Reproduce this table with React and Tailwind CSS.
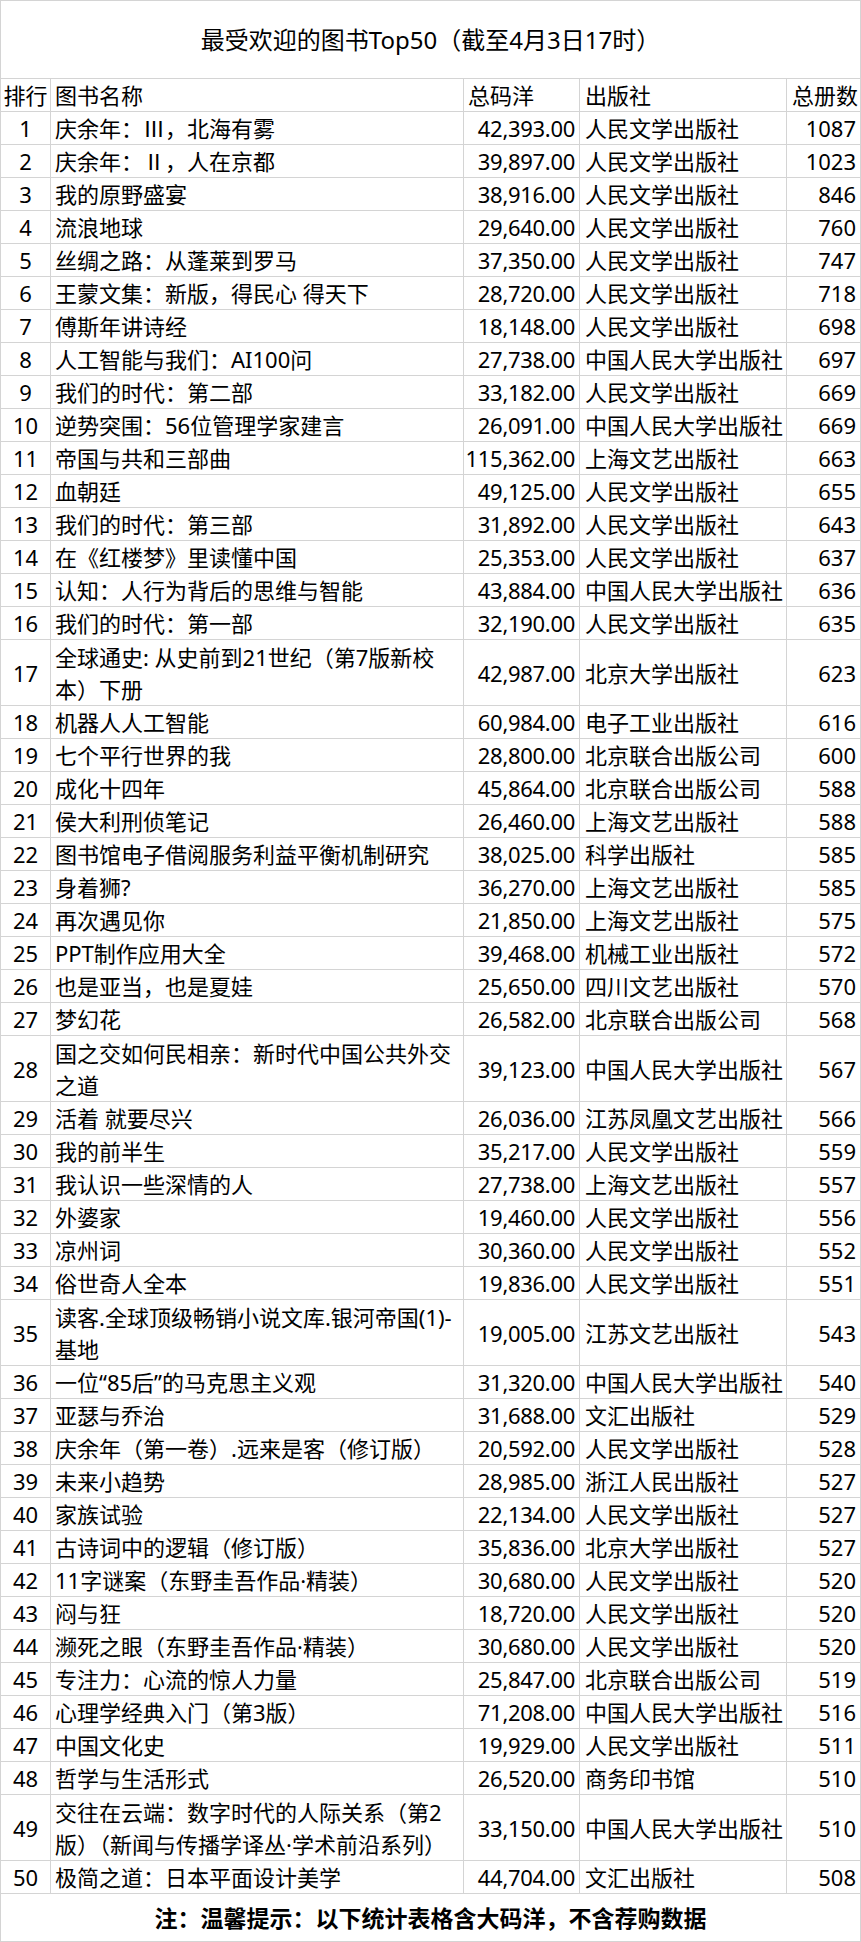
import React from "react";

const rows = [
  [1, "庆余年：Ⅲ，北海有雾", "42,393.00", "人民文学出版社", "1087"],
  [2, "庆余年：Ⅱ，人在京都", "39,897.00", "人民文学出版社", "1023"],
  [3, "我的原野盛宴", "38,916.00", "人民文学出版社", "846"],
  [4, "流浪地球", "29,640.00", "人民文学出版社", "760"],
  [5, "丝绸之路：从蓬莱到罗马", "37,350.00", "人民文学出版社", "747"],
  [6, "王蒙文集：新版，得民心 得天下", "28,720.00", "人民文学出版社", "718"],
  [7, "傅斯年讲诗经", "18,148.00", "人民文学出版社", "698"],
  [8, "人工智能与我们：AI100问", "27,738.00", "中国人民大学出版社", "697"],
  [9, "我们的时代：第二部", "33,182.00", "人民文学出版社", "669"],
  [10, "逆势突围：56位管理学家建言", "26,091.00", "中国人民大学出版社", "669"],
  [11, "帝国与共和三部曲", "115,362.00", "上海文艺出版社", "663"],
  [12, "血朝廷", "49,125.00", "人民文学出版社", "655"],
  [13, "我们的时代：第三部", "31,892.00", "人民文学出版社", "643"],
  [14, "在《红楼梦》里读懂中国", "25,353.00", "人民文学出版社", "637"],
  [15, "认知：人行为背后的思维与智能", "43,884.00", "中国人民大学出版社", "636"],
  [16, "我们的时代：第一部", "32,190.00", "人民文学出版社", "635"],
  [17, ["全球通史: 从史前到21世纪（第7版新校", "本）下册"], "42,987.00", "北京大学出版社", "623"],
  [18, "机器人人工智能", "60,984.00", "电子工业出版社", "616"],
  [19, "七个平行世界的我", "28,800.00", "北京联合出版公司", "600"],
  [20, "成化十四年", "45,864.00", "北京联合出版公司", "588"],
  [21, "侯大利刑侦笔记", "26,460.00", "上海文艺出版社", "588"],
  [22, "图书馆电子借阅服务利益平衡机制研究", "38,025.00", "科学出版社", "585"],
  [23, "身着狮?", "36,270.00", "上海文艺出版社", "585"],
  [24, "再次遇见你", "21,850.00", "上海文艺出版社", "575"],
  [25, "PPT制作应用大全", "39,468.00", "机械工业出版社", "572"],
  [26, "也是亚当，也是夏娃", "25,650.00", "四川文艺出版社", "570"],
  [27, "梦幻花", "26,582.00", "北京联合出版公司", "568"],
  [28, ["国之交如何民相亲：新时代中国公共外交", "之道"], "39,123.00", "中国人民大学出版社", "567"],
  [29, "活着 就要尽兴", "26,036.00", "江苏凤凰文艺出版社", "566"],
  [30, "我的前半生", "35,217.00", "人民文学出版社", "559"],
  [31, "我认识一些深情的人", "27,738.00", "上海文艺出版社", "557"],
  [32, "外婆家", "19,460.00", "人民文学出版社", "556"],
  [33, "凉州词", "30,360.00", "人民文学出版社", "552"],
  [34, "俗世奇人全本", "19,836.00", "人民文学出版社", "551"],
  [35, ["读客.全球顶级畅销小说文库.银河帝国(1)-", "基地"], "19,005.00", "江苏文艺出版社", "543"],
  [36, "一位“85后”的马克思主义观", "31,320.00", "中国人民大学出版社", "540"],
  [37, "亚瑟与乔治", "31,688.00", "文汇出版社", "529"],
  [38, "庆余年（第一卷）.远来是客（修订版）", "20,592.00", "人民文学出版社", "528"],
  [39, "未来小趋势", "28,985.00", "浙江人民出版社", "527"],
  [40, "家族试验", "22,134.00", "人民文学出版社", "527"],
  [41, "古诗词中的逻辑（修订版）", "35,836.00", "北京大学出版社", "527"],
  [42, "11字谜案（东野圭吾作品·精装）", "30,680.00", "人民文学出版社", "520"],
  [43, "闷与狂", "18,720.00", "人民文学出版社", "520"],
  [44, "濒死之眼（东野圭吾作品·精装）", "30,680.00", "人民文学出版社", "520"],
  [45, "专注力：心流的惊人力量", "25,847.00", "北京联合出版公司", "519"],
  [46, "心理学经典入门（第3版）", "71,208.00", "中国人民大学出版社", "516"],
  [47, "中国文化史", "19,929.00", "人民文学出版社", "511"],
  [48, "哲学与生活形式", "26,520.00", "商务印书馆", "510"],
  [49, ["交往在云端：数字时代的人际关系（第2", "版）（新闻与传播学译丛·学术前沿系列）"], "33,150.00", "中国人民大学出版社", "510"],
  [50, "极简之道：日本平面设计美学", "44,704.00", "文汇出版社", "508"],
];

const cell = "border-r border-b border-[#d4d4d4] flex items-center overflow-hidden whitespace-nowrap";

function Row({ r }) {
  const [rank, name, amt, pub, cnt] = r;
  const dbl = Array.isArray(name);
  const h = dbl ? "h-[66px]" : "h-[33px]";
  return (
    <div className={`grid grid-cols-[50px_413px_116px_207px_74px] ${h}`}>
      <div className={`${cell} justify-center`}>{rank}</div>
      <div className={`${cell} pl-[4px]`}>
        {dbl ? (
          <div className="flex flex-col">
            <span>{name[0]}</span>
            <span>{name[1]}</span>
          </div>
        ) : (
          name
        )}
      </div>
      <div className={`${cell} justify-end pr-[4px] tracking-[-0.3px]`}>{amt}</div>
      <div className={`${cell} pl-[5px]`}>{pub}</div>
      <div className={`${cell} justify-end pr-[4px]`}>{cnt}</div>
    </div>
  );
}

export default function App() {
  return (
    <div
      className="w-[861px] bg-white text-black border-l border-t border-[#d4d4d4] text-[22px] leading-[32px]"
      style={{ fontFamily: '"Noto Sans", "Noto Sans CJK SC", sans-serif' }}
    >
      <div className="h-[78px] border-r border-b border-[#d4d4d4] flex items-center justify-center text-[24px]">
        最受欢迎的图书Top50（截至4月3日17时）
      </div>
      <div className="grid grid-cols-[50px_413px_116px_207px_74px] h-[33px]">
        <div className={`${cell} justify-center`}>排行</div>
        <div className={`${cell} pl-[4px]`}>图书名称</div>
        <div className={`${cell} pl-[4px]`}>总码洋</div>
        <div className={`${cell} pl-[5px]`}>出版社</div>
        <div className={`${cell} justify-end pr-[2px]`}>总册数</div>
      </div>
      {rows.map((r) => (
        <Row key={r[0]} r={r} />
      ))}
      <div className="h-[48px] border-r border-b border-[#d4d4d4] flex items-center justify-center text-[23px] font-bold">
        注：温馨提示：以下统计表格含大码洋，不含荐购数据
      </div>
    </div>
  );
}
